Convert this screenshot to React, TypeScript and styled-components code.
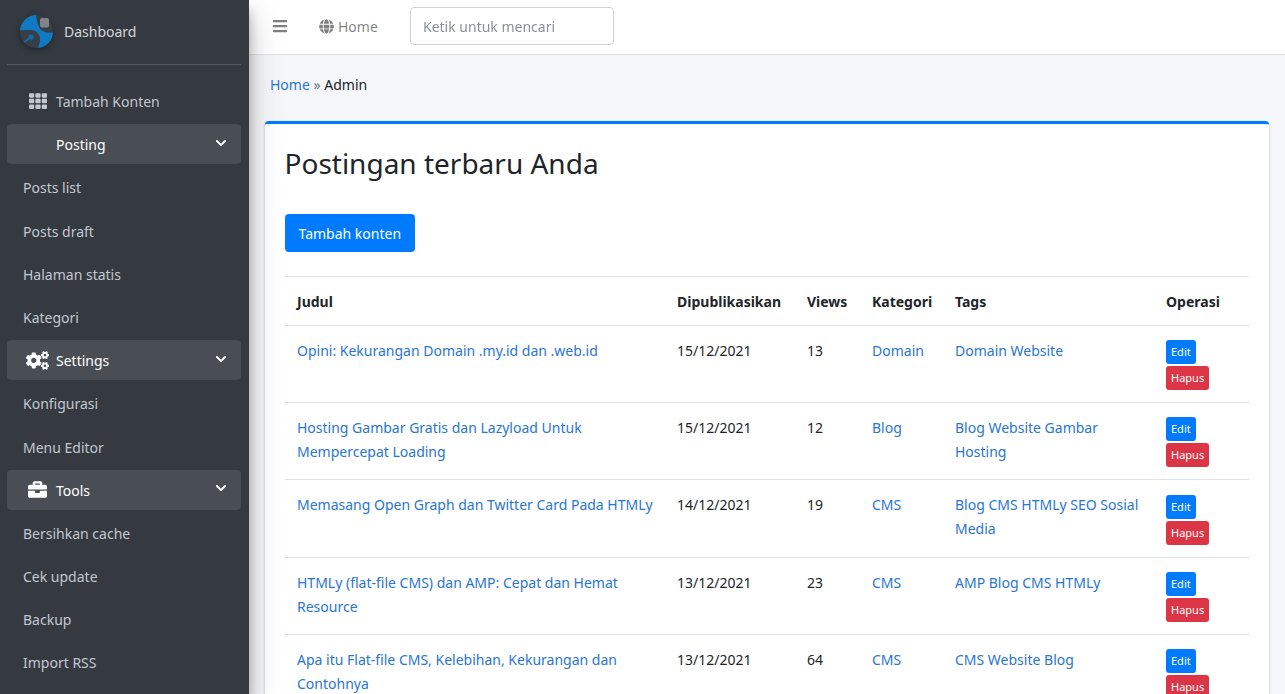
import React from 'react';
import styled, { createGlobalStyle } from 'styled-components';
import { FaBars, FaBriefcase, FaChevronDown, FaCogs, FaGlobe, FaTh } from 'react-icons/fa';

const GlobalStyle = createGlobalStyle`
	html, body {
		margin: 0;
		height: 100%;
		overflow: hidden;
	}
	body {
		font-family: 'Noto Sans', 'Liberation Sans', sans-serif;
		font-size: 14px;
		line-height: 24px;
		color: #212529;
		background: #f4f6f9;
	}
	* {
		box-sizing: border-box;
	}
`;

const posts = [
	{
		title: 'Opini: Kekurangan Domain .my.id dan .web.id',
		date: '15/12/2021',
		views: 13,
		category: 'Domain',
		tags: 'Domain Website'
	},
	{
		title: 'Hosting Gambar Gratis dan Lazyload Untuk Mempercepat Loading',
		date: '15/12/2021',
		views: 12,
		category: 'Blog',
		tags: 'Blog Website Gambar Hosting'
	},
	{
		title: 'Memasang Open Graph dan Twitter Card Pada HTMLy',
		date: '14/12/2021',
		views: 19,
		category: 'CMS',
		tags: 'Blog CMS HTMLy SEO Sosial Media'
	},
	{
		title: 'HTMLy (flat-file CMS) dan AMP: Cepat dan Hemat Resource',
		date: '13/12/2021',
		views: 23,
		category: 'CMS',
		tags: 'AMP Blog CMS HTMLy'
	},
	{
		title: 'Apa itu Flat-file CMS, Kelebihan, Kekurangan dan Contohnya',
		date: '13/12/2021',
		views: 64,
		category: 'CMS',
		tags: 'CMS Website Blog'
	}
];

const App = () => {
	return (
		<Page>
			<GlobalStyle />
			<Sidebar>
				<Brand>
					<Logo width='33' height='33' viewBox='0 0 33 33'>
						<circle cx='16.5' cy='16.5' r='16.5' fill='#363f48' />
						<path d='M16 0C17 6 18 12 21 15C24 17 28 18 33 17.500A16.500 16.500 0 0 1 18 33C20 28 21 23 19 20C17 16 14 15 10 15C6 15 3 15 0 15.500A16.500 16.500 0 0 1 16 0z' fill='#0f79c4' />
						<rect x='20' y='3' width='9' height='9.500' rx='2' fill='#808487' />
						<circle cx='11' cy='22' r='2.600' fill='#0f6cae' />
						<path d='M11 22L4 27' stroke='#0f6cae' strokeWidth='1.800' />
					</Logo>
					<BrandText>Dashboard</BrandText>
				</Brand>
				<Nav>
					<NavLink>
						<NavIcon><FaTh size={18} /></NavIcon>
						Tambah Konten
					</NavLink>
					<NavGroup>
						<NavIcon />
						Posting
						<Chevron size={12} />
					</NavGroup>
					<NavChild>Posts list</NavChild>
					<NavChild>Posts draft</NavChild>
					<NavChild>Halaman statis</NavChild>
					<NavChild>Kategori</NavChild>
					<NavGroup>
						<NavIcon><FaCogs size={23} /></NavIcon>
						Settings
						<Chevron size={12} />
					</NavGroup>
					<NavChild>Konfigurasi</NavChild>
					<NavChild>Menu Editor</NavChild>
					<NavGroup>
						<NavIcon><FaBriefcase size={19} /></NavIcon>
						Tools
						<Chevron size={12} />
					</NavGroup>
					<NavChild>Bersihkan cache</NavChild>
					<NavChild>Cek update</NavChild>
					<NavChild>Backup</NavChild>
					<NavChild>Import RSS</NavChild>
				</Nav>
			</Sidebar>
			<Main>
				<Topbar>
					<MenuButton><FaBars size={16} /></MenuButton>
					<HomeLink>
						<FaGlobe size={15} />
						Home
					</HomeLink>
					<Search placeholder='Ketik untuk mencari' />
				</Topbar>
				<Content>
					<Breadcrumb>
						<a>Home</a> <Separator>»</Separator> Admin
					</Breadcrumb>
					<Card>
						<Title>Postingan terbaru Anda</Title>
						<PrimaryButton>Tambah konten</PrimaryButton>
						<Table>
							<colgroup>
								<col style={{ width: 380 }} />
								<col style={{ width: 130 }} />
								<col style={{ width: 65 }} />
								<col style={{ width: 83 }} />
								<col style={{ width: 211 }} />
								<col style={{ width: 95 }} />
							</colgroup>
							<thead>
								<tr>
									<th>Judul</th>
									<th>Dipublikasikan</th>
									<th>Views</th>
									<th>Kategori</th>
									<th>Tags</th>
									<th>Operasi</th>
								</tr>
							</thead>
							<tbody>
								{posts.map(post => (
									<tr key={post.title}>
										<td><a>{post.title}</a></td>
										<td>{post.date}</td>
										<td>{post.views}</td>
										<td><a>{post.category}</a></td>
										<td><a>{post.tags}</a></td>
										<td>
											<Actions>
												<SmallButton $color='#007bff'>Edit</SmallButton>
												<SmallButton $color='#dc3545'>Hapus</SmallButton>
											</Actions>
										</td>
									</tr>
								))}
							</tbody>
						</Table>
					</Card>
				</Content>
			</Main>
		</Page>
	);
};

const Page = styled.div`
	display: flex;
	height: 100vh;
	overflow: hidden;
`;

const Sidebar = styled.aside`
	flex: 0 0 249px;
	padding: 0 8px 0 7px;
	background: #343a40;
	box-shadow: 0 14px 28px rgba(0, 0, 0, 0.25), 0 10px 10px rgba(0, 0, 0, 0.22);
	position: relative;
	z-index: 2;
`;

const Brand = styled.div`
	display: flex;
	align-items: center;
	gap: 11px;
	height: 65px;
	padding: 0 0 2px 13px;
	border-bottom: 1px solid #4f5962;
`;

const Logo = styled.svg`
	filter: drop-shadow(0 2px 3px rgba(0, 0, 0, 0.35));
`;

const BrandText = styled.span`
	padding-top: 2px;
	color: rgba(255, 255, 255, 0.8);
	font-size: 14px;
`;

const Nav = styled.nav`
	display: flex;
	flex-direction: column;
	gap: 3.2px;
	padding-top: 16px;
`;

const NavLink = styled.div`
	display: flex;
	align-items: center;
	height: 40px;
	padding: 2px 16px 0 20px;
	border-radius: 4px;
	color: #c2c7d0;
	font-size: 14px;
`;

const NavGroup = styled(NavLink)`
	background: rgba(255, 255, 255, 0.1);
	color: #fff;
`;

const NavChild = styled(NavLink)`
	padding-left: 16px;
`;

const NavIcon = styled.span`
	display: flex;
	align-items: center;
	justify-content: center;
	flex: 0 0 31px;
	margin: -2px 0 0 -2px;
	padding-right: 6px;
`;

const Chevron = styled(FaChevronDown)`
	margin: -5px -2px 0 auto;
`;

const Main = styled.div`
	flex: 1;
	min-width: 0;
`;

const Topbar = styled.header`
	display: flex;
	align-items: center;
	height: 55px;
	padding: 0 0 3px 23px;
	background: #fff;
	border-bottom: 1px solid #dee2e6;
	color: rgba(0, 0, 0, 0.5);
`;

const MenuButton = styled.span`
	display: flex;
	width: 47px;
`;

const HomeLink = styled.span`
	display: flex;
	align-items: center;
	gap: 4px;
	width: 91px;
	padding-top: 2px;
	font-size: 14px;
`;

const Search = styled.input`
	width: 204px;
	height: 38px;
	padding: 2px 12px 0;
	border: 1px solid #ced4da;
	border-radius: 4px;
	font: inherit;
	outline: none;

	&::placeholder {
		color: #6c757d;
		opacity: 0.8;
	}
`;

const Content = styled.main`
	padding: 0 16px;

	a {
		color: #2a76d2;
	}
`;

const Breadcrumb = styled.div`
	height: 66px;
	padding: 18px 5px 0;
`;

const Separator = styled.span`
	color: #6c757d;
`;

const Card = styled.section`
	padding: 20px;
	background: #fff;
	border-top: 3px solid #007bff;
	border-radius: 4px;
	box-shadow: 0 0 1px rgba(0, 0, 0, 0.125), 0 1px 3px rgba(0, 0, 0, 0.2);
`;

const Title = styled.h1`
	margin: -2px 0 30px -0.5px;
	font-size: 28px;
	font-weight: 400;
	line-height: 42px;
`;

const PrimaryButton = styled.button`
	display: block;
	height: 38px;
	padding: 2px 13.5px 0;
	border: 0;
	border-radius: 4px;
	background: #007bff;
	color: #fff;
	font: inherit;
`;

const Table = styled.table`
	width: 964px;
	margin-top: 24px;
	border-collapse: collapse;
	table-layout: fixed;

	th,
	td {
		padding: 13px 12px 11px;
		border-top: 1px solid #dee2e6;
		text-align: left;
		vertical-align: top;
	}

	th {
		font-weight: 700;
		border-bottom: 1px solid #dee2e6;
	}

	td {
		height: 77px;
	}

	tbody tr:nth-child(3) td {
		height: 78px;
	}

	tbody tr:nth-child(3) td > div {
		padding-top: 2px;
	}
`;

const Actions = styled.div`
	display: flex;
	flex-direction: column;
	align-items: flex-start;
	gap: 2px;
	padding-top: 1px;
`;

const SmallButton = styled.span<{ $color: string }>`
	padding: 0 5px;
	border-radius: 3px;
	background: ${p => p.$color};
	color: #fff;
	font-size: 11px;
	line-height: 24px;
`;

export default App;
